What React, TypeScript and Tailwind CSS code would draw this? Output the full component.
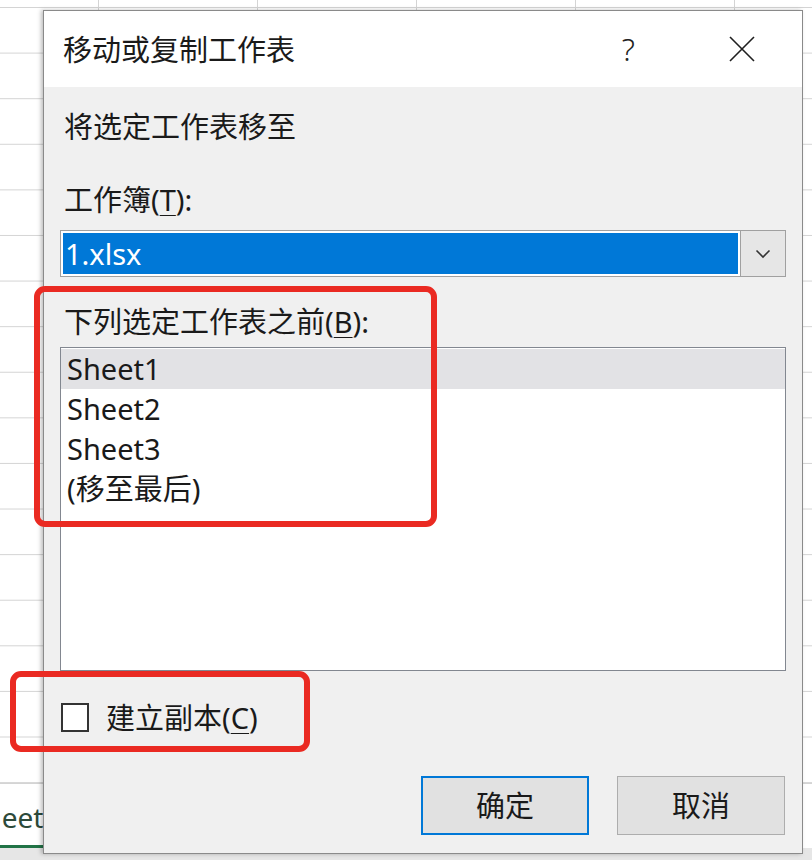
const sheets = ["Sheet1", "Sheet2", "Sheet3", "(移至最后)"];

const FONT = "font-['Noto_Sans','Noto_Sans_CJK_SC',sans-serif]";

function Chevron() {
  return (
    <svg width="16" height="10" viewBox="0 0 16 10" fill="none">
      <path d="M1.5 1.5 L8 8 L14.5 1.5" stroke="#333" strokeWidth="1.6" />
    </svg>
  );
}

function CloseIcon() {
  return (
    <svg width="26" height="26" viewBox="0 0 26 26" fill="none">
      <path d="M1 1 L25 25 M25 1 L1 25" stroke="#1f1f1f" strokeWidth="1.6" />
    </svg>
  );
}

export default function App() {
  return (
    <div className={`relative w-[812px] h-[860px] overflow-hidden bg-white ${FONT}`}>
      {/* worksheet behind the dialog */}
      <div className="flex flex-col h-full">
        <div className="h-[783px] bg-white bg-[linear-gradient(to_bottom,#d4d4d4_1px,transparent_1px),linear-gradient(to_right,#d4d4d4_1px,transparent_1px)] bg-[length:100%_45.6px,159px_100%] bg-[position:0_7px,-61px_0]" />
        <div className="flex-1 flex flex-col border-t border-[#d4d4d4]">
          <div className="w-[43px] overflow-hidden pt-[14px]">
            <span className="block ml-[-31px] text-[28px] leading-[38px] text-[#2d4a3a] whitespace-nowrap">
              Sheet4
            </span>
          </div>
          <div className="w-[43px] h-[3px] mt-[9px] bg-[#217346]" />
          <div className="flex-1 bg-[#e6e6e6]" />
        </div>
      </div>

      {/* 移动或复制工作表 dialog */}
      <div className="absolute left-[43px] top-[10px] w-[760px] h-[844px] flex flex-col border border-[#8a8a8a] bg-[#f0f0f0] shadow-[-2px_0_4px_rgba(0,0,0,0.25)] text-[#1a1a1a]">
        <div className="h-[76px] shrink-0 bg-white flex items-center pl-[19px] pr-[47px]">
          <span className="text-[29px] leading-none">移动或复制工作表</span>
          <span className="ml-auto mr-[94px] text-[31px] font-light leading-none text-[#222]">?</span>
          <CloseIcon />
        </div>

        <div className="flex-1 flex flex-col px-[16px]">
          <div className="pl-[4px] pt-[21px] text-[29px] leading-[38px]">将选定工作表移至</div>

          <div className="pl-[4px] mt-[35px] text-[29px] leading-[38px]">
            工作簿(<span className="underline underline-offset-4 decoration-1">T</span>):
          </div>

          <div className="mt-[11px] h-[47px] flex border border-[#a0a0a0] bg-white">
            <div className="flex-1 m-[2px] bg-[#0078d7] flex items-center pl-[2px] text-white text-[29px]">
              1.xlsx
            </div>
            <div className="w-[45px] border-l border-[#a0a0a0] bg-[#e6e6e6] flex items-center justify-center">
              <Chevron />
            </div>
          </div>

          <div className="pl-[4px] mt-[26px] text-[29px] leading-[38px]">
            下列选定工作表之前(<span className="underline underline-offset-4 decoration-1">B</span>):
          </div>

          <div className="mt-[6px] h-[324px] border border-[#828790] bg-white pt-[1px]">
            {sheets.map((name, i) => (
              <div
                key={name}
                className={`h-[40px] flex items-center pl-[6px] text-[29px] ${
                  i === 0 ? "bg-[#e2e2e5]" : ""
                }`}
              >
                {name}
              </div>
            ))}
          </div>

          <div className="mt-[27px] h-[38px] flex items-center gap-[17px] pl-[1px]">
            <div className="w-[28px] h-[29px] border-2 border-[#333] bg-white" />
            <span className="text-[29px] leading-none">
              建立副本(<span className="underline underline-offset-4 decoration-1">C</span>)
            </span>
          </div>

          <div className="mt-[40px] flex justify-end gap-[28px] pr-[1px]">
            <button className="w-[168px] h-[59px] border-2 border-[#0078d7] bg-[#e1e1e1] text-[29px] text-[#1a1a1a]">
              确定
            </button>
            <button className="w-[168px] h-[59px] border border-[#adadad] bg-[#e1e1e1] text-[29px] text-[#1a1a1a]">
              取消
            </button>
          </div>
        </div>
      </div>

      {/* red callouts */}
      <div className="absolute left-[34px] top-[286px] w-[403px] h-[241px] border-[6px] border-[#ea2a22] rounded-[11px]" />
      <div className="absolute left-[10px] top-[671px] w-[300px] h-[81px] border-[6px] border-[#ea2a22] rounded-[11px]" />
    </div>
  );
}
